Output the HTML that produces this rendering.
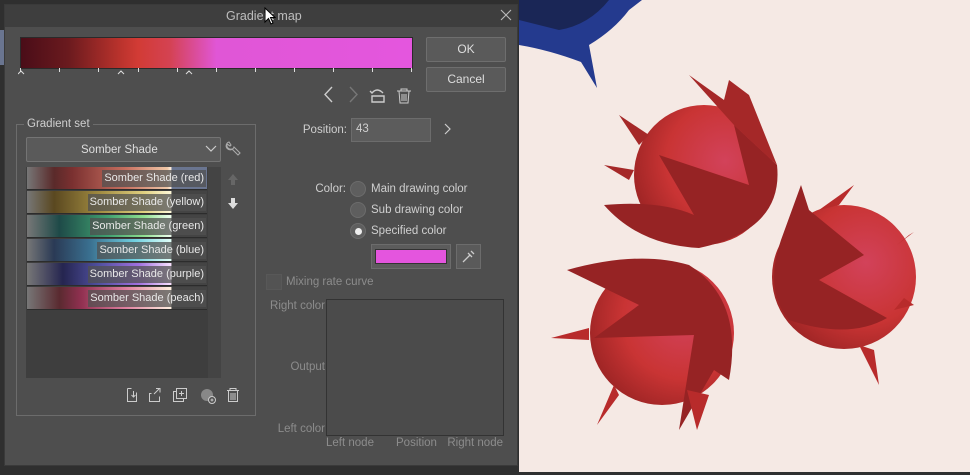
<!DOCTYPE html>
<html><head><meta charset="utf-8"><style>
*{margin:0;padding:0;box-sizing:border-box}
body{width:970px;height:475px;overflow:hidden;background:#2f2f2f;font-family:"Liberation Sans",sans-serif;font-size:11.5px;color:#cfcfcf;position:relative}
.a{position:absolute}
.t{position:absolute;white-space:nowrap;line-height:14px}
.r{position:absolute;white-space:nowrap;line-height:14px;text-align:right}
.dim{color:#8c8c8c}
.btn{position:absolute;background:#5a5a5a;border:1px solid #6e6e6e;border-radius:2px;text-align:center;color:#ddd;font-size:12px}
.item{position:absolute;left:27px;width:180px;height:23px;border-bottom:1px solid #2c2c2c}
.lbl{position:absolute;right:1px;top:3px;height:17px;padding:1px 2px;background:rgba(80,80,80,.75);color:#e8e8e8;font-size:11px;line-height:15px}
.radio{position:absolute;width:16px;height:16px;border-radius:50%;background:#5e5e5e;border:1px solid #6c6c6c}
</style></head><body>
<div class="a" style="left:0;top:30px;width:4px;height:35px;background:#6a7590"></div>
<div class="a" style="left:519px;top:0;width:451px;height:472px;background:#f5e9e4"></div>
<svg class="a" style="left:519px;top:0" width="451" height="472">
<defs>
<radialGradient id="g1" cx="0.65" cy="0.4" r="0.7"><stop offset="0" stop-color="#d2425a"/><stop offset="0.6" stop-color="#c93434"/><stop offset="1" stop-color="#9c2424"/></radialGradient>
</defs>
<path d="M0 0 H123 L110 10 Q95 30 70 45 L78 88 L62 62 Q30 50 0 45Z" fill="#243a8e"/>
<path d="M0 0 H90 Q70 25 40 30 Q20 25 0 20Z" fill="#1a2656"/>
<g>
<circle cx="185" cy="175" r="70" fill="url(#g1)"/>
<path d="M140 155 L230 185 L215 125 L258 165 Q265 230 180 248 Q120 245 85 205 Q140 200 175 215Z" fill="#962324"/>
<path d="M170 75 L205 100 L210 80 L230 95 L258 165 L215 125Z M100 115 L130 135 L120 145Z M85 165 L115 170 L110 180Z" fill="#a52828"/>
</g>
<g>
<circle cx="325" cy="277" r="72" fill="url(#g1)"/>
<path d="M345 255 L300 280 L368 318 Q330 340 270 320 Q245 290 262 240 L282 185 L290 210 Z" fill="#962324"/>
<path d="M335 185 L320 205 L300 210Z M390 235 L378 245 L395 232Z M395 305 L375 310 L385 298Z M340 345 L360 385 L355 350Z" fill="#b82b2b"/>
</g>
<g>
<circle cx="143" cy="333" r="72" fill="url(#g1)"/>
<path d="M48 270 Q120 250 170 265 Q225 300 210 380 L195 370 L160 430 L175 335 L75 338 L120 305Z" fill="#962324"/>
<path d="M32 338 L70 328 L70 340Z M78 425 L95 385 L100 395Z M178 430 L168 390 L190 395Z" fill="#b82b2b"/>
</g>
</svg>
<div class="a" style="left:4px;top:4px;width:514px;height:462px;background:#4e4e4e;border:1px solid #3a3a3a"></div>
<div class="a" style="left:5px;top:5px;width:512px;height:22px;background:#3e3e3e"></div>
<div class="t" style="left:226px;top:9px;color:#bdbdbd;font-size:12.5px">Gradient map</div>
<svg class="a" style="left:500px;top:9px" width="12" height="12"><path d="M1 1L11 11M11 1L1 11" stroke="#bbb" stroke-width="1.1"/></svg>
<svg class="a" style="left:264px;top:7px" width="12" height="18"><path d="M1 1 V15 L4.5 11.5 L7 17 L9 16 L6.5 10.5 H11Z" fill="#fff" stroke="#000" stroke-width="1"/></svg>
<div class="a" style="left:20px;top:37px;width:393px;height:32px;border:1px solid #2a2a2a;background:linear-gradient(90deg,#4a0d18 0%,#6a1a1e 12%,#b8322c 25%,#d23b35 30%,#d44252 38%,#e056d6 50%,#e456de 100%)"></div>
<svg class="a" style="left:18px;top:68px" width="400" height="8" stroke="#ddd" stroke-width="1">
<path d="M2.5 0v4M41.5 0v4M80.5 0v4M120.5 0v4M159.5 0v4M198.5 0v4M237.5 0v4M276.5 0v4M315.5 0v4M354.5 0v4M393.5 0v4"/>
<path d="M0 6 L3 3 L6 6M100 6L103 3L106 6M168 6L171 3L174 6" fill="none"/>
</svg>
<div class="btn" style="left:426px;top:37px;width:80px;height:25px;line-height:23px">OK</div>
<div class="btn" style="left:426px;top:67px;width:80px;height:25px;line-height:23px">Cancel</div>
<svg class="a" style="left:320px;top:85px" width="95" height="20" fill="none" stroke-width="1.4">
<path d="M12 2 L5 9.5 L12 17" stroke="#ccc"/>
<path d="M30 2 L37 9.5 L30 17" stroke="#777"/>
<path d="M52 8 Q57 2 63 8 M50 6 l2 2 l2 -2 M52 11 h12 v6 h-12z" stroke="#ccc"/>
<path d="M77 6h14M81 6v-2h6v2M79 6l1 12h8l1-12M82 9v7M84 9v7M86 9v7" stroke="#ccc" stroke-width="1"/>
</svg>
<div class="a" style="left:16px;top:124px;width:240px;height:292px;border:1px solid #6c6c6c"></div>
<div class="t" style="left:24px;top:117px;background:#4e4e4e;padding:0 3px">Gradient set</div>
<div class="a" style="left:26px;top:137px;width:195px;height:25px;background:#5a5a5a;border:1px solid #747474;border-radius:2px"></div>
<div class="t" style="left:81px;top:143px;color:#ddd">Somber Shade</div>
<svg class="a" style="left:205px;top:145px" width="12" height="8"><path d="M1 1 L6 6 L11 1" fill="none" stroke="#ccc" stroke-width="1.2"/></svg>
<svg class="a" style="left:225px;top:140px" width="18" height="18"><path d="M4 2 A4 4 0 1 0 9 7 L15 13 L13 15 L7 9 A4 4 0 0 1 2 4 L5 6 L6 5 Z" fill="none" stroke="#aaa" stroke-width="1.1"/></svg>
<div class="a" style="left:26px;top:167px;width:195px;height:211px;background:#3e3e3e"></div>
<div class="a" style="left:208px;top:167px;width:13px;height:211px;background:#444"></div>
<div class="item" style="top:167px;background:linear-gradient(90deg,#777,#5a2a2a 15%,#7a3030 25%,#c87060 55%,#f0c8a8 78%,#fff0e0 80%,#6a7590 80.5%)"><div class="lbl">Somber Shade (red)</div></div>
<div class="item" style="top:191px;background:linear-gradient(90deg,#777,#5a4820 15%,#a08a40 40%,#e0d080 65%,#fff8d8 80%,#444 80.5%)"><div class="lbl">Somber Shade (yellow)</div></div>
<div class="item" style="top:215px;background:linear-gradient(90deg,#777,#1e4a48 18%,#40a070 45%,#90e090 65%,#f0fff0 80%,#444 80.5%)"><div class="lbl">Somber Shade (green)</div></div>
<div class="item" style="top:239px;background:linear-gradient(90deg,#777,#2a3a55 15%,#3a7090 35%,#70d0e0 60%,#e0fff8 80%,#444 80.5%)"><div class="lbl">Somber Shade (blue)</div></div>
<div class="item" style="top:263px;background:linear-gradient(90deg,#777,#252550 20%,#5050a0 40%,#a070e0 62%,#f8e0ff 80%,#444 80.5%)"><div class="lbl">Somber Shade (purple)</div></div>
<div class="item" style="top:287px;background:linear-gradient(90deg,#777,#5a2a30 18%,#903050 30%,#e080a0 55%,#fff0e0 80%,#444 80.5%)"><div class="lbl">Somber Shade (peach)</div></div>
<svg class="a" style="left:226px;top:172px" width="16" height="40"><path d="M7 2 L2 8 H5 V13 H9 V8 H12Z" fill="#666"/><path d="M5 26 V31 H2 L7 37 L12 31 H9 V26Z" fill="#ddd"/></svg>
<svg class="a" style="left:125px;top:385px" width="120" height="20" fill="none" stroke="#ccc" stroke-width="1">
<path d="M2.5 3.5h4M2.5 3.5v13h9v-9M8.5 6v6M6.5 10l2 2l2-2"/>
<path d="M26.5 8.5h-2v8h10v-5M29 9l5-5M31 3.5h4v4"/>
<path d="M51.5 6.5h-3v10h10v-3M51.5 3.5h10v10h-10zM56.5 6v5M54 8.5h5"/>
<circle cx="82" cy="10" r="6" fill="#888" stroke="none"/><circle cx="87" cy="15" r="3.5" fill="#4e4e4e" stroke="#ccc"/><path d="M85.5 15h3M87 13.5v3"/>
<path d="M102 5.5h12M105 5.5v-2h6v2M103.5 5.5v11h9v-11M106 8v7M108 8v7M110 8v7"/>
</svg>
<div class="r" style="right:623px;top:123px">Position:</div>
<div class="a" style="left:351px;top:118px;width:80px;height:24px;background:#5c5c5c;border:1px solid #6c6c6c"></div>
<div class="t" style="left:356px;top:122px">43</div>
<svg class="a" style="left:443px;top:122px" width="10" height="14"><path d="M2 2 L7 7 L2 12" fill="none" stroke="#ccc" stroke-width="1.2"/></svg>
<div class="r" style="right:624px;top:182px">Color:</div>
<div class="radio" style="left:350px;top:181px"></div><div class="t" style="left:371px;top:182px">Main drawing color</div>
<div class="radio" style="left:350px;top:202px"></div><div class="t" style="left:371px;top:203px">Sub drawing color</div>
<div class="radio" style="left:350px;top:223px"></div><div class="a" style="left:355px;top:228px;width:7px;height:7px;border-radius:50%;background:#eee"></div><div class="t" style="left:371px;top:224px">Specified color</div>
<div class="a" style="left:371px;top:244px;width:80px;height:25px;background:#5c5c5c;border:1px solid #6c6c6c"></div>
<div class="a" style="left:375px;top:249px;width:72px;height:15px;background:#e455de;border:1px solid #333"></div>
<div class="a" style="left:456px;top:244px;width:25px;height:25px;background:#5a5a5a;border:1px solid #6c6c6c"></div>
<svg class="a" style="left:460px;top:248px" width="17" height="17"><path d="M3 14 L10 7 M8 5 L12 9 M11 3 L14 6" fill="none" stroke="#ccc" stroke-width="1.3"/></svg>
<div class="a" style="left:266px;top:274px;width:16px;height:16px;background:#535353;border:1px solid #585858"></div>
<div class="t dim" style="left:286px;top:275px">Mixing rate curve</div>
<div class="a" style="left:326px;top:299px;width:178px;height:137px;border:1px solid #333;background:#4b4b4b"></div>
<div class="r dim" style="right:645px;top:299px">Right color</div>
<div class="r dim" style="right:645px;top:360px">Output</div>
<div class="r dim" style="right:645px;top:422px">Left color</div>
<div class="t dim" style="left:326px;top:436px">Left node</div>
<div class="t dim" style="left:396px;top:436px">Position</div>
<div class="r dim" style="right:467px;top:436px">Right node</div>
</body></html>
